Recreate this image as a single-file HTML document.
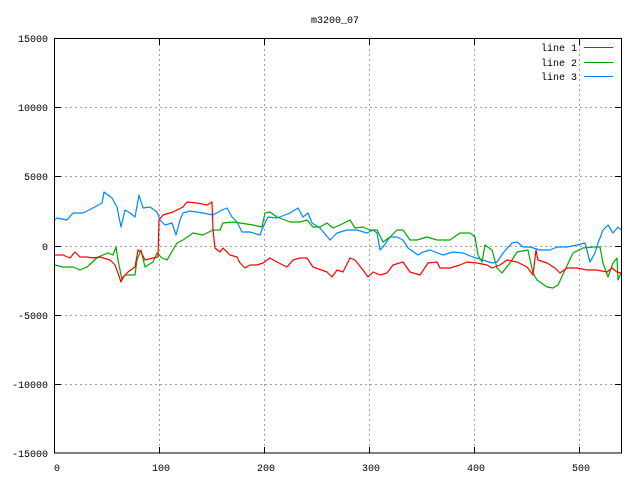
<!DOCTYPE html>
<html><head><style>html,body{margin:0;padding:0;background:#fff}svg{display:block}text{font-family:"Liberation Mono",monospace;font-size:10px;fill:#000}</style></head><body>
<svg width="640" height="480" viewBox="0 0 640 480" xmlns="http://www.w3.org/2000/svg">
<rect width="640" height="480" fill="#fff"/>
<g stroke="#a0a0a0" stroke-width="1" stroke-dasharray="2,3" shape-rendering="crispEdges">
<path d="M159.5 39V453M264.5 39V453M369.5 39V453M474.5 39V453M579.5 39V453"/>
<path d="M55 107.5H621M55 176.5H621M55 246.5H621M55 315.5H621M55 384.5H621"/>
</g>
<g stroke="#000" stroke-width="1" shape-rendering="crispEdges" fill="none">
<rect x="54.5" y="38.5" width="567" height="414.5"/>
<path d="M55 107.5h6M55 176.5h6M55 246.5h6M55 315.5h6M55 384.5h6M621 107.5h-6M621 176.5h-6M621 246.5h-6M621 315.5h-6M621 384.5h-6"/>
<path d="M159.5 453v-6M264.5 453v-6M369.5 453v-6M474.5 453v-6M579.5 453v-6M159.5 39v6M264.5 39v6M369.5 39v6M474.5 39v6M579.5 39v6"/>
</g>
<text x="335" y="23" text-anchor="middle">m3200_07</text>
<g text-anchor="end">
<text x="48" y="42">15000</text><text x="48" y="111">10000</text><text x="48" y="180">5000</text><text x="48" y="250">0</text><text x="48" y="319">-5000</text><text x="48" y="388">-10000</text><text x="48" y="457">-15000</text>
</g>
<g text-anchor="middle">
<text x="57" y="471">0</text><text x="161" y="471">100</text><text x="266" y="471">200</text><text x="371" y="471">300</text><text x="476" y="471">400</text><text x="581" y="471">500</text>
</g>
<g text-anchor="end"><text x="577" y="51">line 1</text><text x="577" y="66">line 2</text><text x="577" y="80">line 3</text></g>
<rect x="584" y="47" width="29" height="1" fill="#ff0000"/>
<rect x="584" y="62" width="29" height="1" fill="#00a000"/>
<rect x="584" y="76" width="29" height="1" fill="#0080ff"/>
<g fill="none" stroke-width="1.2" stroke-linejoin="round">
<polyline stroke="#08f" points="55,220 57,218 67,220 73,213 83,213 93,208 102,203 104,192 112,198 117,207 121,227 125,210 130,213 135,217 139,195 143,208 150,207 157,212 160,220 165,225 172,223 176,235 180,220 183,213 190,211 203,213 213,215 222,210 227,208 232,217 237,222 242,232 250,232 260,235 263,227 268,217 277,218 290,213 298,208 303,217 308,213 312,223 320,228 330,240 337,233 347,230 357,230 367,233 373,230 377,233 380,250 383,247 390,237 397,237 403,240 408,248 418,255 423,252 430,250 443,255 453,252 463,253 473,257 483,260 492,263 497,262 503,253 512,243 517,242 523,247 530,247 540,250 550,250 557,247 567,247 577,245 585,243 590,262 595,253 598,243 600,238 603,230 608,225 613,233 618,227 621,230"/>
<polyline stroke="#0a0" points="55,265 63,267 73,267 80,270 87,267 98,257 108,253 113,255 116,247 118,260 122,280 125,275 135,275 137,260 141,250 145,267 153,262 157,253 162,258 167,260 177,243 183,240 193,233 203,235 213,230 220,230 223,223 233,222 240,223 253,225 262,227 265,213 270,212 277,217 290,222 300,222 307,220 313,227 320,227 327,223 333,228 340,225 350,220 355,228 363,227 370,230 377,230 383,242 390,237 397,230 403,230 410,240 417,240 427,237 437,240 440,240 450,240 460,233 470,233 475,237 478,255 482,262 485,245 492,250 497,268 502,273 510,263 517,252 528,250 533,273 537,280 547,287 553,288 558,285 565,270 573,253 583,248 593,247 600,247 603,263 608,277 613,263 617,258 618,280 621,273"/>
<polyline stroke="#f00" points="55,255 57,255 63,255 70,258 75,252 80,257 87,257 93,258 100,257 110,260 115,265 118,273 121,282 123,277 128,272 135,267 138,250 141,252 145,260 153,258 158,257 159,220 163,215 173,212 183,207 187,202 197,203 207,205 212,202 213,230 215,248 220,252 223,248 230,255 237,257 240,263 245,268 250,265 257,265 263,263 270,258 277,262 287,267 293,260 300,258 307,258 313,267 327,272 332,277 337,270 343,272 350,258 355,260 363,270 368,277 373,272 380,275 387,273 393,265 403,262 410,272 420,275 428,263 437,262 440,268 450,268 460,265 467,262 477,263 487,265 492,268 500,265 507,260 517,262 527,267 533,275 536,250 538,260 547,263 555,268 560,273 567,268 577,268 587,270 597,270 607,272 612,268 617,272 621,273"/>
</g>
</svg>
</body></html>
